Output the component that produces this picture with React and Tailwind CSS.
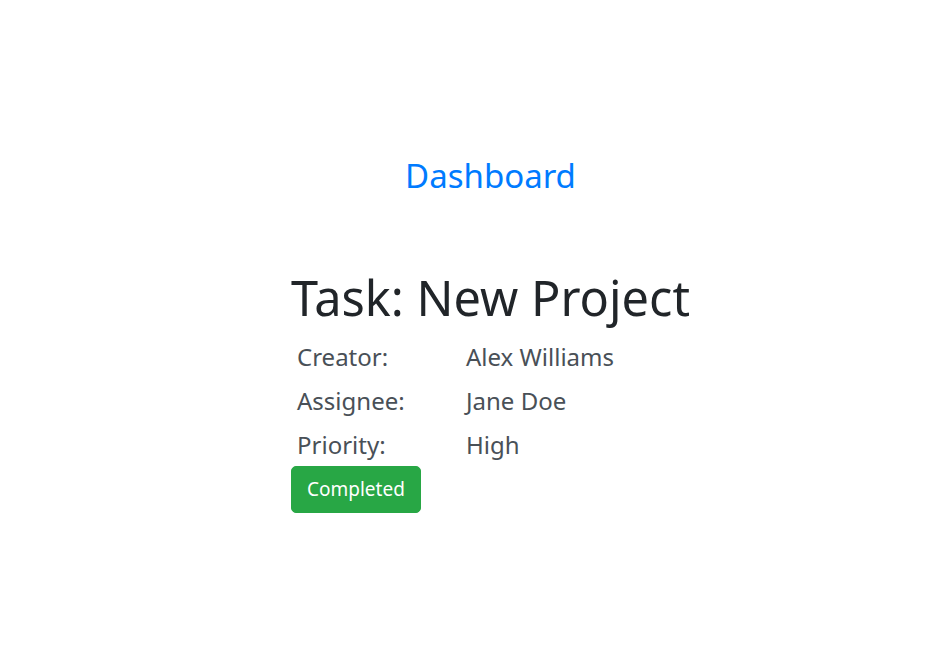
export default function App() {
  const rows = [
    ["Creator:", "Alex Williams"],
    ["Assignee:", "Jane Doe"],
    ["Priority:", "High"],
  ];

  return (
    <div
      className="min-h-screen bg-white pl-[55px] pt-[157px] flex flex-col items-center"
      style={{ fontFamily: '"Noto Sans", "Open Sans", sans-serif' }}
    >
      <a href="#" className="text-[33px] leading-[38px] text-[#007bff]">
        Dashboard
      </a>

      <div className="mt-[73px] flex flex-col items-start">
        <h1 className="text-[48.7px] leading-[58px] text-[#212529] mb-[9px]">Task: New Project</h1>
        <table className="text-[24px] leading-[36px] text-[#495057]">
          <tbody>
            {rows.map(([label, value]) => (
              <tr key={label}>
                <td className="px-[6px] py-[4px] w-[175px]">{label}</td>
                <td className="px-0 py-[4px]">{value}</td>
              </tr>
            ))}
          </tbody>
        </table>
        <button className="-mt-px bg-[#28a745] text-white text-[19px] leading-[29px] px-[15px] py-2 rounded-[5px] border border-[#28a745]">
          Completed
        </button>
      </div>
    </div>
  );
}
